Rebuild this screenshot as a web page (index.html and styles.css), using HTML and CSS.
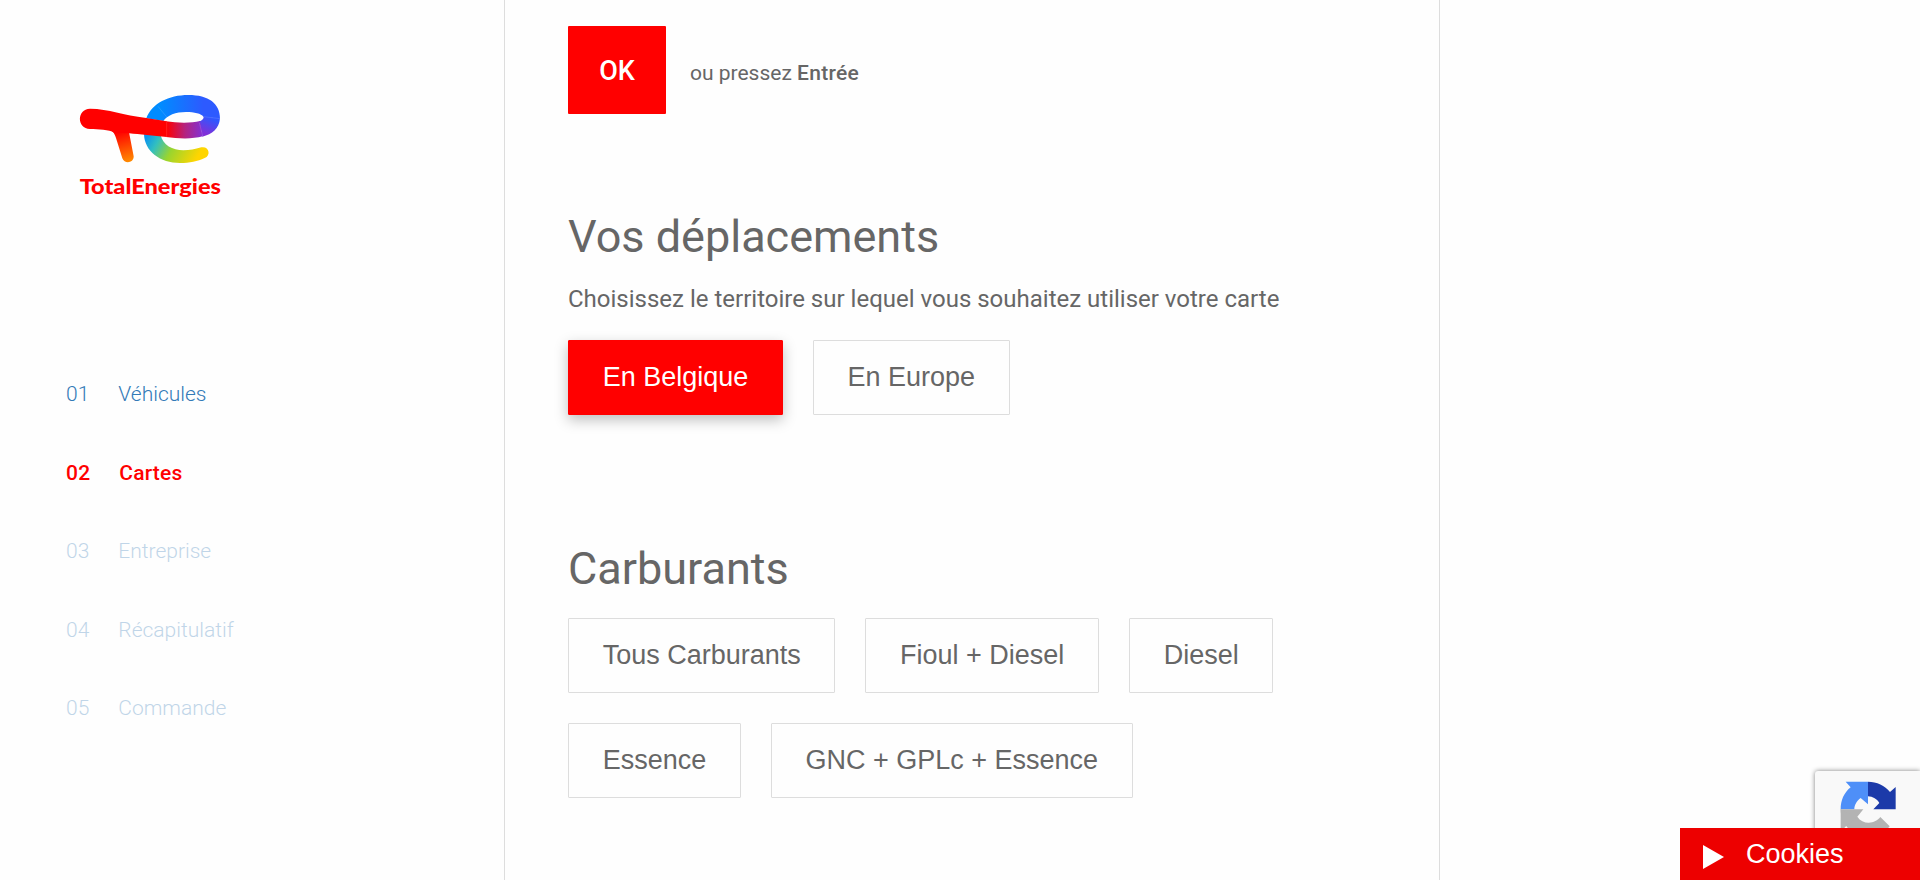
FILE: index.html
```
<!DOCTYPE html>
<html lang="fr">
<head>
<meta charset="utf-8">
<title>TotalEnergies - Cartes</title>
<link rel="stylesheet" href="styles.css">
</head>
<body>
<div class="page">
  <aside class="sidebar">
    <svg class="logo" viewBox="0 0 540 390" role="img" aria-label="TotalEnergies">
      <defs>
        <linearGradient id="leg" gradientUnits="userSpaceOnUse" x1="180" y1="155" x2="205" y2="245"><stop offset="0" stop-color="#f00"/><stop offset="1" stop-color="#ff8a00"/></linearGradient>
        <linearGradient id="blue" gradientUnits="userSpaceOnUse" x1="300" y1="80" x2="430" y2="80"><stop offset="0" stop-color="#008cff"/><stop offset="1" stop-color="#2d5aff"/></linearGradient>
        <linearGradient id="bar" gradientUnits="userSpaceOnUse" x1="320" y1="150" x2="430" y2="150"><stop offset="0" stop-color="#f00"/><stop offset=".5" stop-color="#b4237f"/><stop offset="1" stop-color="#8030d8"/></linearGradient>
        <linearGradient id="turn" gradientUnits="userSpaceOnUse" x1="435" y1="160" x2="455" y2="115"><stop offset="0" stop-color="#8030d8"/><stop offset="1" stop-color="#2f57ff"/></linearGradient>
        <linearGradient id="bowl" gradientUnits="userSpaceOnUse" x1="262" y1="165" x2="405" y2="245"><stop offset="0" stop-color="#0b94ee"/><stop offset=".22" stop-color="#32bfc0"/><stop offset=".52" stop-color="#9ad52e"/><stop offset="1" stop-color="#ffd500"/></linearGradient>
      </defs>
      <path fill="url(#bowl)" d="M252 162L302 165C308 195 338 211 370 211C390 211 404 207 424 202C446 197 455 226 434 234C412 244 390 249 360 249C301 249 253 214 252 162Z"/>
      <path fill="url(#blue)" d="M259 115C276 70 326 45 385 45C446 45 480 70 480 116L430 110C424 101 403 96 378 96C348 96 321 106 310 123Z"/>
      <path fill="url(#turn)" d="M430 108L480 115C477 146 457 163 427 170L418 124C427 121 433 115 430 108Z"/>
      <path fill="url(#bar)" d="M318 124C352 129 394 130 420 123L428 169C398 178 354 176 318 171Z"/>
      <path fill="url(#leg)" d="M140 148C157 151 163 158 168 174L187 235C194 254 222 249 221 229L207 157Z"/>
      <path fill="#f00" d="M90 86C148 87 188 105 259 114L320 124L320 171C282 168 237 163 208 160L163 158C147 148 115 148 90 147C50 145 50 87 90 86Z"/>
      <path class="seam" d="M294 79L320 111M430 110L480 116M418 128L428 168M320 125V171"/>
      <text class="wordmark" x="59" y="341" textLength="424" lengthAdjust="spacingAndGlyphs">TotalEnergies</text>
    </svg>
    <nav class="steps">
      <a class="step done"><span class="num">01</span><span>Véhicules</span></a>
      <a class="step current"><span class="num">02</span><span>Cartes</span></a>
      <a class="step"><span class="num">03</span><span>Entreprise</span></a>
      <a class="step"><span class="num">04</span><span>Récapitulatif</span></a>
      <a class="step"><span class="num">05</span><span>Commande</span></a>
    </nav>
  </aside>
  <main class="content">
    <div class="confirm">
      <button class="ok">OK</button>
      <p class="hint">ou pressez <b>Entrée</b></p>
    </div>
    <section class="question travel">
      <h2>Vos déplacements</h2>
      <p class="lead">Choisissez le territoire sur lequel vous souhaitez utiliser votre carte</p>
      <div class="choices">
        <button class="choice selected">En Belgique</button>
        <button class="choice">En Europe</button>
      </div>
    </section>
    <section class="question fuel">
      <h2>Carburants</h2>
      <div class="choices">
        <button class="choice">Tous Carburants</button>
        <button class="choice">Fioul + Diesel</button>
        <button class="choice">Diesel</button>
        <button class="choice">Essence</button>
        <button class="choice">GNC + GPLc + Essence</button>
      </div>
    </section>
  </main>
</div>
<div class="captcha">
  <svg viewBox="0 0 168 168" aria-hidden="true">
    <path fill="#1c3aa9" d="M84 2C110 2 135 14 150 33L167 18V85H100L118 66C112 55 98 46 84 46Z"/>
    <path fill="#4e8ff8" d="M84 2H17L32 19C12 35 2 58 2 85H43C43 72 51 58 62 51L84 70Z"/>
    <path fill="#b3b3b3" d="M2 85H70L52 107C60 119 73 125 86 125C101 125 113 118 121 108L149 136C133 157 110 168 85 168C40 168 2 132 2 85Z"/>
    <path fill="#b3b3b3" d="M2 85V152L18 136L50 110Z"/>
  </svg>
</div>
<div class="cookies">
  <svg viewBox="0 0 21 24" aria-hidden="true"><path fill="#fff" d="M0 0L21 12L0 24Z"/></svg>
  <span>Cookies</span>
</div>
</body>
</html>
```
FILE: styles.css
```
* { box-sizing: border-box; }
body {
  margin: 0;
  height: 880px;
  overflow: hidden;
  background: #fefefe;
  color: #666;
  font-family: Roboto, "Liberation Sans", sans-serif;
}
h2, p { margin: 0; font-weight: 400; }
.page {
  display: grid;
  grid-template-columns: 504px 936px 1fr;
  height: 880px;
}
.sidebar { padding: 80px 0 0 60px; }
.logo { display: block; width: 180px; height: 130px; }
.seam { fill: none; stroke: #fff; stroke-opacity: .25; stroke-width: 1.5; }
.wordmark { font: 900 64px Lato, sans-serif; fill: #f00; }
.steps {
  display: flex;
  flex-direction: column;
  margin-top: 145px;
  padding-left: 6px;
}
.step {
  display: flex;
  height: 78.5px;
  align-items: center;
  gap: 29px;
  font-size: 21px;
  font-weight: 300;
  color: #337ab7;
  opacity: .3;
}
.step.done { opacity: 1; }
.step.current { opacity: 1; color: #f00; font-weight: 500; letter-spacing: .2px; }
.content {
  padding: 26px 63px 0;
  border-left: 1px solid #ddd;
  border-right: 1px solid #ddd;
}
.confirm { display: flex; align-items: center; gap: 24px; }
.ok {
  width: 98px;
  height: 88px;
  padding: 2px 0 0;
  border: 0;
  border-radius: 1px;
  background: #f00;
  color: #fff;
  font: 500 27px Roboto, sans-serif;
}
.hint { font-size: 21px; padding-top: 6px; }
.hint b { font-weight: 500; letter-spacing: .3px; }
.travel { padding-top: 96px; }
.fuel { padding-top: 127px; }
h2 { font-size: 45px; line-height: 54px; }
.lead { font-size: 24px; line-height: 34px; margin-top: 18px; }
.choices {
  display: flex;
  flex-wrap: wrap;
  gap: 30px;
  margin-top: 22px;
}
.lead + .choices { margin-top: 24px; }
.choice {
  height: 75px;
  padding: 0 33.65px;
  border: 1px solid #ddd;
  border-radius: 1px;
  background: transparent;
  color: #666;
  font: 27px "Liberation Sans", Arial, sans-serif;
}
.choice.selected {
  border-color: #f00;
  background: #f00;
  color: #fff;
  box-shadow: 0 5px 14px rgba(0, 0, 0, .25);
}
.captcha {
  position: fixed;
  right: 0;
  top: 771px;
  width: 105px;
  height: 78px;
  padding: 10px 0 0 25px;
  border-radius: 3px 0 0 3px;
  background: #f9f9f9;
  box-shadow: 0 0 5px gray;
}
.captcha svg { display: block; width: 56px; height: 56px; }
.cookies {
  position: fixed;
  right: 0;
  bottom: 0;
  width: 240px;
  height: 52px;
  display: flex;
  align-items: center;
  gap: 22px;
  padding-left: 23px;
  background: #ed0000;
  color: #fff;
  font: 27px "Liberation Sans", Arial, sans-serif;
}
.cookies svg { width: 21px; height: 24px; margin-top: 6px; }
```
